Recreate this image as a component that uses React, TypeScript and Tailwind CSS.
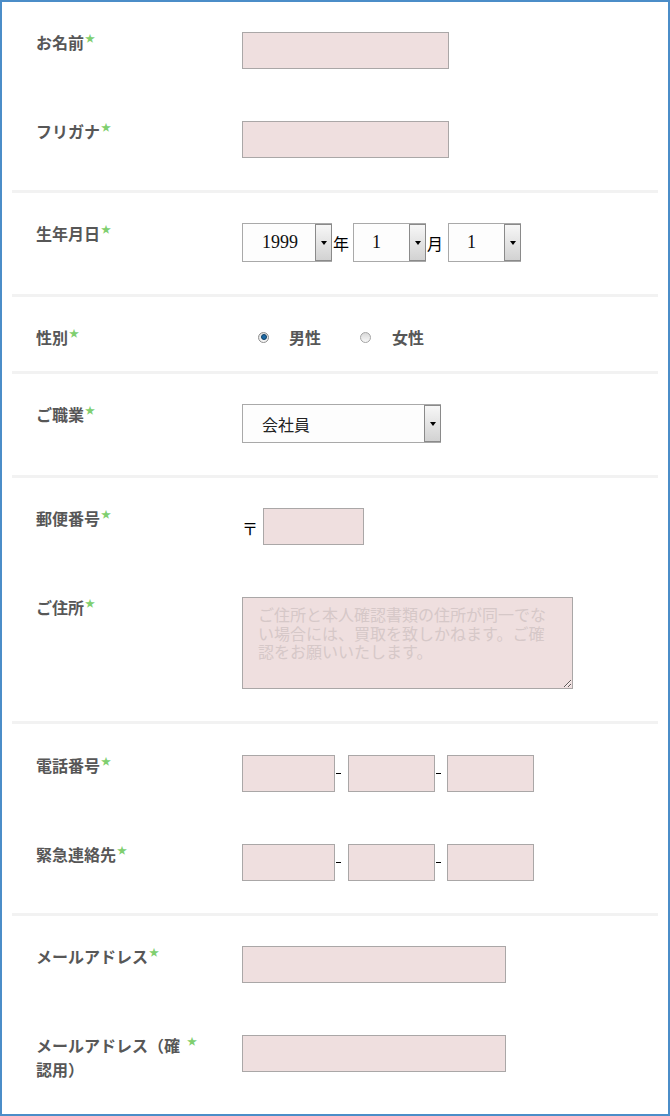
import React from "react";

const jp = "font-['Noto_Sans_CJK_JP',sans-serif]";

function Star({ className = "" }: { className?: string }) {
  return (
    <span
      className={`inline-block align-top text-[10px] leading-none text-[#7fcf6f] mt-[3px] ml-[1px] ${className}`}
    >
      ★
    </span>
  );
}

function Label({ children }: { children: React.ReactNode }) {
  return (
    <div
      className={`w-[206px] shrink-0 -mt-[2px] text-[16px] leading-[24px] font-bold text-[#575757] ${jp}`}
    >
      {children}
      <Star />
    </div>
  );
}

function Field({ className }: { className: string }) {
  return <div className={`h-[37px] border border-[#aaa7a7] bg-[#efdfdf] ${className}`} />;
}

function Arrow() {
  return (
    <div className="self-stretch w-[17px] shrink-0 border border-[#8a8a8a] bg-linear-to-b from-[#f7f7f7] to-[#d2d2d2] flex items-center justify-center">
      <div className="w-0 h-0 border-l-[3px] border-r-[3px] border-t-[4px] border-l-transparent border-r-transparent border-t-black" />
    </div>
  );
}

function Select({
  className,
  children,
  textClass,
}: {
  className: string;
  children: React.ReactNode;
  textClass: string;
}) {
  return (
    <div
      className={`h-[39px] flex items-stretch border-y border-l border-[#a9a9a9] bg-[#fdfdfd] ${className}`}
    >
      <div className={`flex-1 flex items-center ${textClass}`}>{children}</div>
      <Arrow />
    </div>
  );
}

function Radio({ checked }: { checked?: boolean }) {
  if (checked) {
    return (
      <div className="w-[11px] h-[11px] rounded-full border border-[#8e8e8e] bg-linear-to-b from-[#dcdcdc] to-[#f6f6f6] flex items-center justify-center shrink-0">
        <div className="w-[6px] h-[6px] rounded-full bg-[#1d6aa5] border border-[#0f3f66]" />
      </div>
    );
  }
  return (
    <div className="w-[11px] h-[11px] rounded-full border border-[#a4a4a4] bg-linear-to-b from-[#d8d8d8] to-[#f8f8f8] shrink-0" />
  );
}

function Sep() {
  return <div className="h-[3px] bg-[#f2f2f2]" />;
}

function Dash({ className }: { className: string }) {
  return (
    <div className={`flex items-center justify-start h-[37px] ${className}`}>
      <div className="w-[5px] h-[1px] bg-black ml-[1px]" />
    </div>
  );
}

const digit = "text-[18px] text-[#111] font-['Liberation_Serif',serif]";

export default function App() {
  return (
    <div className="w-[670px] h-[1116px] border-2 border-[#4b8dc8] bg-white overflow-hidden">
      <div className="mx-[10px]">
        {/* Section 1 */}
        <div className="pl-[24px] pt-[30px] pb-[32px] flex flex-col gap-[52px]">
          <div className="flex items-start">
            <Label>お名前</Label>
            <Field className="w-[207px]" />
          </div>
          <div className="flex items-start">
            <Label>フリガナ</Label>
            <Field className="w-[207px]" />
          </div>
        </div>
        <Sep />
        {/* Section 2 */}
        <div className="pl-[24px] pt-[30px] pb-[32px]">
          <div className="flex items-start">
            <Label>生年月日</Label>
            <div className={`flex items-center text-[16px] text-black ${jp}`}>
              <Select className="w-[90px]" textClass={`pl-[19px] ${digit}`}>
                1999
              </Select>
              <span className="ml-[1px] w-[16px]">年</span>
              <Select className="w-[73px] ml-[4px]" textClass={`pl-[18px] ${digit}`}>
                1
              </Select>
              <span className="ml-[1px] w-[16px]">月</span>
              <Select className="w-[73px] ml-[5px]" textClass={`pl-[18px] ${digit}`}>
                1
              </Select>
            </div>
          </div>
        </div>
        <Sep />
        {/* Section 3 */}
        <div className="pl-[24px] pt-[30px] pb-[22px]">
          <div className="flex items-start">
            <Label>性別</Label>
            <div
              className={`h-[24px] -mt-[2px] flex items-center text-[16px] font-bold text-[#575757] ${jp}`}
            >
              <div className="ml-[16px] flex items-center">
                <Radio checked />
                <span className="ml-[20px]">男性</span>
              </div>
              <div className="ml-[39px] flex items-center">
                <Radio />
                <span className="ml-[21px]">女性</span>
              </div>
            </div>
          </div>
        </div>
        <Sep />
        {/* Section 4 */}
        <div className="pl-[24px] pt-[30px] pb-[32px]">
          <div className="flex items-start">
            <Label>ご職業</Label>
            <Select className="w-[199px]" textClass={`pl-[19px] text-[16px] text-[#222] ${jp}`}>
              会社員
            </Select>
          </div>
        </div>
        <Sep />
        {/* Section 5 */}
        <div className="pl-[24px] pt-[30px] pb-[32px] flex flex-col gap-[52px]">
          <div className="flex items-start">
            <Label>郵便番号</Label>
            <div className={`flex items-center text-[16px] text-black ${jp}`}>
              <span className="w-[16px] pt-[3px]">〒</span>
              <Field className="w-[101px] ml-[5px]" />
            </div>
          </div>
          <div className="flex items-start">
            <Label>ご住所</Label>
            <textarea
              className={`w-[331px] h-[92px] border border-[#aaa7a7] bg-[#efdfdf] px-[15px] pt-[7px] text-[16px] leading-[18.5px] text-[#555] placeholder:text-[#d6c8c8] outline-none ${jp}`}
              placeholder="ご住所と本人確認書類の住所が同一でない場合には、買取を致しかねます。ご確認をお願いいたします。"
            />
          </div>
        </div>
        <Sep />
        {/* Section 6 */}
        <div className="pl-[24px] pt-[31px] pb-[32px] flex flex-col gap-[52px]">
          <div className="flex items-start">
            <Label>電話番号</Label>
            <div className="flex items-start">
              <Field className="w-[93px]" />
              <Dash className="w-[13px]" />
              <Field className="w-[87px]" />
              <Dash className="w-[12px]" />
              <Field className="w-[87px]" />
            </div>
          </div>
          <div className="flex items-start">
            <Label>緊急連絡先</Label>
            <div className="flex items-start">
              <Field className="w-[93px]" />
              <Dash className="w-[13px]" />
              <Field className="w-[87px]" />
              <Dash className="w-[12px]" />
              <Field className="w-[87px]" />
            </div>
          </div>
        </div>
        <Sep />
        {/* Section 7 */}
        <div className="pl-[24px] pt-[30px] pb-[28px] flex flex-col gap-[52px]">
          <div className="flex items-start">
            <Label>メールアドレス</Label>
            <Field className="w-[264px]" />
          </div>
          <div className="flex items-start">
            <div
              className={`w-[206px] shrink-0 -mt-[2px] text-[16px] leading-[24px] font-bold text-[#575757] ${jp}`}
            >
              <div>
                メールアドレス（確
                <Star className="ml-[7px]" />
              </div>
              <div>認用）</div>
            </div>
            <Field className="w-[264px]" />
          </div>
        </div>
      </div>
    </div>
  );
}
